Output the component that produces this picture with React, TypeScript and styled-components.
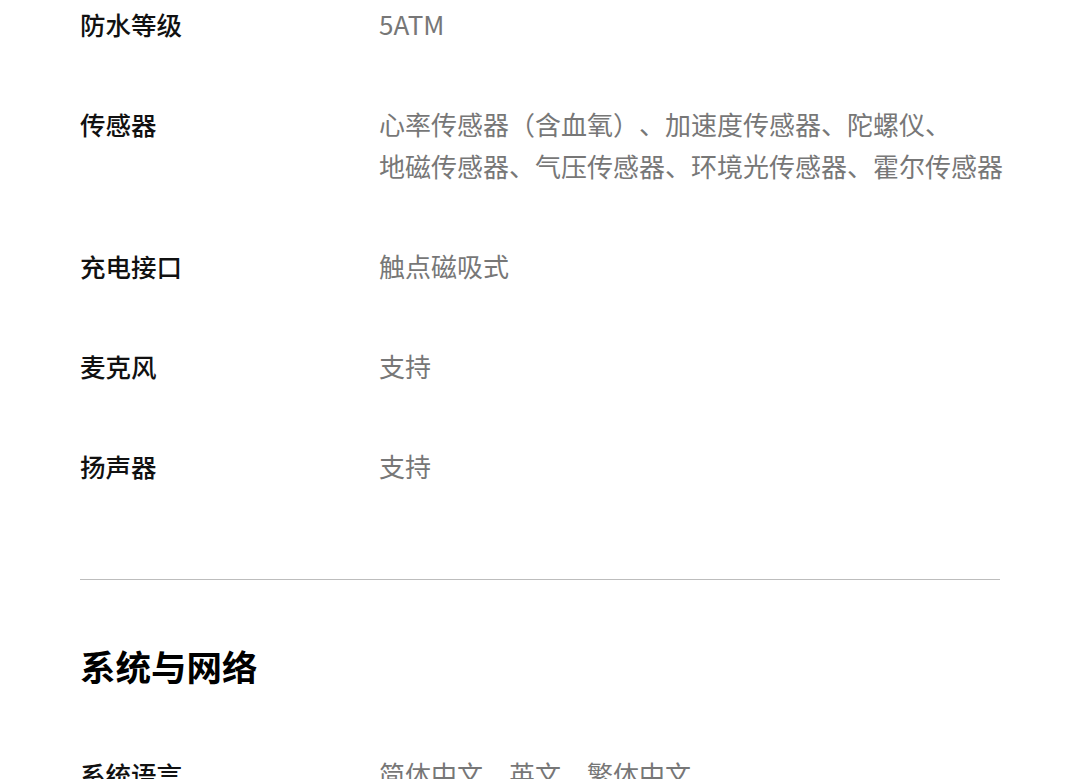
import React from 'react';
import styled, { createGlobalStyle } from 'styled-components';

const GlobalStyle = createGlobalStyle`
  body {
    margin: 0;
    background: #ffffff;
    font-family: "Noto Sans CJK SC", "Noto Sans", sans-serif;
  }
`;

const Page = styled.div`
  padding: 3px 80px 0 80px;
  width: 920px;
`;

const SpecList = styled.div`
  display: flex;
  flex-direction: column;
  gap: 58px;
`;

const SpecRow = styled.div`
  display: grid;
  grid-template-columns: 299px 1fr;
  font-size: 26px;
  line-height: 42px;
`;

const Label = styled.div`
  color: #111111;
  font-weight: 500;
  font-size: 25.5px;
`;

const Value = styled.div`
  color: #777777;
  font-weight: 400;
  white-space: nowrap;
  text-spacing-trim: space-all;
`;

const Divider = styled.hr`
  margin: 92px 0 0 0;
  border: none;
  border-top: 1px solid #bdbdbd;
  height: 0;
`;

const SectionTitle = styled.h2`
  margin: 61px 0 62px 0;
  font-size: 35.5px;
  line-height: 50px;
  font-weight: 700;
  color: #000000;
`;

type Spec = { label: string; lines: string[] };

const hardware: Spec[] = [
  { label: '防水等级', lines: ['5ATM'] },
  {
    label: '传感器',
    lines: [
      '心率传感器（含血氧）、加速度传感器、陀螺仪、',
      '地磁传感器、气压传感器、环境光传感器、霍尔传感器',
    ],
  },
  { label: '充电接口', lines: ['触点磁吸式'] },
  { label: '麦克风', lines: ['支持'] },
  { label: '扬声器', lines: ['支持'] },
];

const system: Spec[] = [{ label: '系统语言', lines: ['简体中文、英文、繁体中文'] }];

const Specs: React.FC<{ items: Spec[] }> = ({ items }) => (
  <SpecList>
    {items.map((item) => (
      <SpecRow key={item.label}>
        <Label>{item.label}</Label>
        <Value>
          {item.lines.map((line) => (
            <div key={line}>{line}</div>
          ))}
        </Value>
      </SpecRow>
    ))}
  </SpecList>
);

export default function App() {
  return (
    <>
      <GlobalStyle />
      <Page>
        <Specs items={hardware} />
        <Divider />
        <SectionTitle>系统与网络</SectionTitle>
        <Specs items={system} />
      </Page>
    </>
  );
}
